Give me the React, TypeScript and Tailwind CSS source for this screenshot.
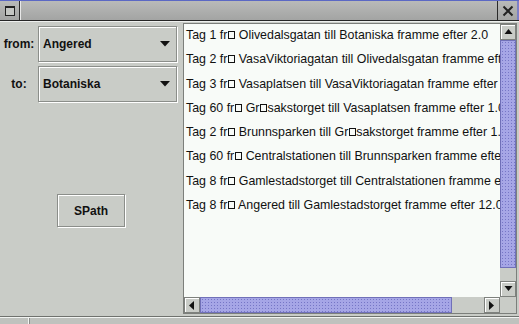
import React from "react";

const rows: { pre: string; post: string }[] = [
  { pre: "Tag 1 fr", post: " Olivedalsgatan till Botaniska framme efter 2.0" },
  { pre: "Tag 2 fr", post: " VasaViktoriagatan till Olivedalsgatan framme efter 1.0" },
  { pre: "Tag 3 fr", post: " Vasaplatsen till VasaViktoriagatan framme efter 1.0" },
  { pre: "Tag 60 fr", post: " Gr#sakstorget till Vasaplatsen framme efter 1.0" },
  { pre: "Tag 2 fr", post: " Brunnsparken till Gr#sakstorget framme efter 1.0" },
  { pre: "Tag 60 fr", post: " Centralstationen till Brunnsparken framme efter 1.0" },
  { pre: "Tag 8 fr", post: " Gamlestadstorget till Centralstationen framme efter 2.0" },
  { pre: "Tag 8 fr", post: " Angered till Gamlestadstorget framme efter 12.0" },
];

function Box() {
  return (
    <span className="inline-block w-[7px] h-[8px] border border-[#111] align-baseline mx-[0.5px]" />
  );
}

function renderText(s: string) {
  const parts = s.split("#");
  return parts.map((p, i) => (
    <React.Fragment key={i}>
      {i > 0 && <Box />}
      {p}
    </React.Fragment>
  ));
}

function Combo({ value }: { value: string }) {
  return (
    <div className="w-[139px] h-[36px] border border-[#8b8e8a] shadow-[inset_1px_1px_0_#ffffff,1px_1px_0_#ffffff] flex items-center justify-between pl-[4px] pr-[6px]">
      <span className="font-bold text-[12px] text-[#111] mt-[-1px]">{value}</span>
      <svg width="10" height="6" viewBox="0 0 10 6">
        <polygon points="0,0 10,0 5,5.5" fill="#111" />
      </svg>
    </div>
  );
}

function ScrollBtn({ dir }: { dir: "up" | "down" | "left" | "right" }) {
  const pts: Record<string, string> = {
    up: "0,5 8,5 4,0",
    down: "0,0 8,0 4,5",
    left: "5,0 5,9 0,4.5",
    right: "0,0 0,9 5,4.5",
  };
  const horiz = dir === "left" || dir === "right";
  return (
    <div className="w-[16px] h-[16px] shrink-0 bg-[#c9ccc7] border border-[#7e817d] shadow-[inset_1px_1px_0_#ffffff] flex items-center justify-center">
      <svg width={horiz ? 6 : 9} height={horiz ? 9 : 6} viewBox={horiz ? "0 0 6 9" : "0 0 8 6"}>
        <polygon points={pts[dir]} fill="#111" />
      </svg>
    </div>
  );
}

const thumb =
  "bg-[#a6a6e6] bg-[radial-gradient(#7676c6_0.8px,transparent_0.9px)] bg-[length:3px_3px] border border-[#7070b8]";

export default function App() {
  return (
    <div
      className="w-[519px] h-[324px] overflow-hidden bg-[#c9ccc7] flex flex-col text-[#111]"
      style={{ fontFamily: '"Liberation Sans", Arial, sans-serif' }}
    >
      {/* title bar */}
      <div className="h-[22px] shrink-0 flex flex-col">
        <div className="h-[1px] bg-[#5b68c4]" />
        <div className="h-[19px] flex bg-gradient-to-b from-[#b9bab9] to-[#a3a4a3]">
          <div className="w-[20px] flex items-center justify-center border-r border-[#2a2a2a]">
            <div className="w-[10px] h-[10px] border border-[#222] border-t-2 bg-[#c4c6c3] mt-[1px]" />
          </div>
          <div className="flex-1 border-l border-[#e8e8e8]" />
          <div className="w-[20px] flex items-center justify-center border-l border-[#2a2a2a]">
            <svg width="12" height="12" viewBox="0 0 12 12">
              <path d="M1.5 1.5 L10.5 10.5 M10.5 1.5 L1.5 10.5" stroke="#222" strokeWidth="2" />
            </svg>
          </div>
          <div className="w-[2px] bg-[#7d80c8]" />
        </div>
        <div className="h-[1px] bg-[#262626]" />
        <div className="h-[1px] bg-[#eef0ee]" />
      </div>

      {/* main */}
      <div className="h-[294px] shrink-0 flex">
        <div className="w-[183px] shrink-0 pt-[4px] flex flex-col">
          <div className="flex items-center">
            <div className="w-[38px] text-center font-bold text-[12px]">from:</div>
            <Combo value="Angered" />
          </div>
          <div className="flex items-center mt-[4px]">
            <div className="w-[38px] text-center font-bold text-[12px]">to:</div>
            <Combo value="Botaniska" />
          </div>
          <div className="mt-[92px] ml-[57px] w-[68px] h-[33px] border border-[#8b8e8a] shadow-[inset_1px_1px_0_#ffffff,1px_1px_0_#ffffff] flex items-center justify-center font-bold text-[12px]">
            SPath
          </div>
        </div>

        <div className="mt-[1px] w-[334px] h-[291px] shrink-0 border border-[#7c7f7b] flex flex-col">
          <div className="flex h-[273px]">
            <div className="w-[316px] h-[273px] bg-[#f8fbf8] overflow-hidden pl-[2px] pt-[1px]">
              {rows.map((r, i) => (
                <div key={i} className="h-[24.3px] leading-[20px] text-[12.4px] whitespace-nowrap text-[#111]">
                  {r.pre}
                  <Box />
                  {renderText(r.post)}
                </div>
              ))}
            </div>
            <div className="w-[16px] flex flex-col bg-[#c9ccc7]">
              <ScrollBtn dir="up" />
              <div className={`h-[228px] ${thumb}`} />
              <div className="h-[13px]" />
              <ScrollBtn dir="down" />
            </div>
          </div>
          <div className="flex h-[16px]">
            <ScrollBtn dir="left" />
            <div className={`w-[252px] h-[16px] ${thumb}`} />
            <div className="w-[32px]" />
            <ScrollBtn dir="right" />
            <div className="w-[16px] bg-[#c9ccc7]" />
          </div>
        </div>
        <div className="w-[2px] bg-[#c9ccc7]" />
      </div>

      {/* status bar */}
      <div className="h-[8px] shrink-0 flex flex-col">
        <div className="h-[1px] bg-[#6f726e]" />
        <div className="h-[1px] bg-[#f2f4f2]" />
        <div className="flex-1 flex bg-[#bfc2be]">
          <div className="w-[29px] border-r border-[#f2f4f2]" />
          <div className="flex-1 border-l border-[#8a8d89]" />
        </div>
      </div>
    </div>
  );
}
